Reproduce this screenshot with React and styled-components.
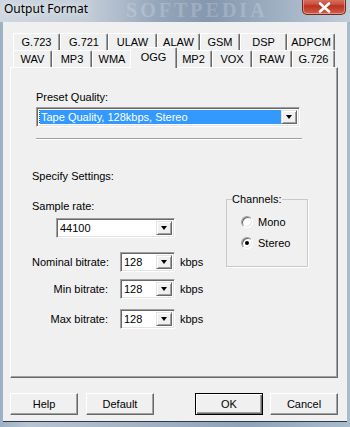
import React from "react";
import styled, { createGlobalStyle, css } from "styled-components";

const GlobalStyle = createGlobalStyle`
  html, body {
    margin: 0;
    padding: 0;
    background: #8c9fb4;
  }
  * {
    box-sizing: border-box;
  }
`;

const topRow = [
  { label: "G.723", w: 47 },
  { label: "G.721", w: 48 },
  { label: "ULAW", w: 49 },
  { label: "ALAW", w: 43 },
  { label: "GSM", w: 40 },
  { label: "DSP", w: 47 },
  { label: "ADPCM", w: 48 },
];

const bottomRow = [
  { label: "WAV", w: 39 },
  { label: "MP3", w: 40 },
  { label: "WMA", w: 40 },
  { label: "OGG", w: 43, active: true },
  { label: "MP2", w: 37 },
  { label: "VOX", w: 40 },
  { label: "RAW", w: 40 },
  { label: "G.726", w: 43 },
];

const bitrates = [
  { label: "Nominal bitrate:", top: 14 },
  { label: "Min bitrate:", top: 7 },
  { label: "Max bitrate:", top: 10 },
];

const App = () => {
  return (
    <>
      <GlobalStyle />
      <Window>
        <TitleBar>
          <Title>Output Format</Title>
          <Watermark>SOFTPEDIA</Watermark>
          <CloseButton>
            <svg width="13" height="11" viewBox="0 0 13 11">
              <path
                d="M2 1.5 L11 9.5 M11 1.5 L2 9.5"
                stroke="#ffffff"
                strokeWidth="2.6"
                strokeLinecap="round"
              />
            </svg>
          </CloseButton>
        </TitleBar>

        <Client>
          <TabStrip>
            <TabRow>
              {topRow.map((t) => (
                <Tab key={t.label} $w={t.w}>
                  {t.label}
                </Tab>
              ))}
            </TabRow>
            <TabRow>
              {bottomRow.map((t) => (
                <Tab key={t.label} $w={t.w} $active={t.active}>
                  {t.label}
                </Tab>
              ))}
            </TabRow>
          </TabStrip>

          <Panel>
            <PresetSection>
              <Label>Preset Quality:</Label>
              <Combo $w={264} $top={3}>
                <ComboField>
                  <Selected>Tape Quality, 128kbps, Stereo</Selected>
                </ComboField>
                <DropButton>
                  <Arrow />
                </DropButton>
              </Combo>
              <Separator />
            </PresetSection>

            <Label $top={30}>Specify Settings:</Label>

            <SettingsRow>
              <LeftColumn>
                <Label $top={4}>Sample rate:</Label>
                <Combo $w={119} $top={5} $left={24}>
                  <ComboField>44100</ComboField>
                  <DropButton>
                    <Arrow />
                  </DropButton>
                </Combo>

                {bitrates.map((b) => (
                  <BitrateRow key={b.label} $top={b.top}>
                    <RowLabel>{b.label}</RowLabel>
                    <Combo $w={55}>
                      <ComboField>128</ComboField>
                      <DropButton>
                        <Arrow />
                      </DropButton>
                    </Combo>
                    <Unit>kbps</Unit>
                  </BitrateRow>
                ))}
              </LeftColumn>

              <GroupBox>
                <Legend>Channels:</Legend>
                <RadioItem>
                  <Radio />
                  Mono
                </RadioItem>
                <RadioItem>
                  <Radio $checked />
                  Stereo
                </RadioItem>
              </GroupBox>
            </SettingsRow>
          </Panel>

          <ButtonBar>
            <ButtonGroup $gap={8}>
              <Button>Help</Button>
              <Button>Default</Button>
            </ButtonGroup>
            <ButtonGroup $gap={7}>
              <Button $default>OK</Button>
              <Button>Cancel</Button>
            </ButtonGroup>
          </ButtonBar>
        </Client>
      </Window>
    </>
  );
};

export default App;

const uiFont = css`
  font-family: "Liberation Sans", Arial, sans-serif;
  font-size: 11px;
  color: #000;
`;

const Window = styled.div`
  width: 350px;
  height: 427px;
  overflow: hidden;
  display: flex;
  flex-direction: column;
  background: linear-gradient(
    90deg,
    #9db0c4 0%,
    #b7c4d2 8%,
    #a3b3c4 40%,
    #8ea3b9 70%,
    #a9bccd 100%
  );
`;

const TitleBar = styled.div`
  height: 22px;
  display: flex;
  align-items: flex-start;
  padding-left: 4px;
  overflow: hidden;
  background: linear-gradient(
    90deg,
    #cfd7e0 0%,
    #c3cdd8 25%,
    #94a6bb 45%,
    #8497ae 60%,
    #9fb1c4 80%,
    #c2cdd9 100%
  );
`;

const Title = styled.span`
  font-family: "Noto Sans", "Open Sans", sans-serif;
  font-size: 12px;
  line-height: 18px;
  color: #000;
  text-shadow: 0 0 6px rgba(255, 255, 255, 0.9);
  white-space: nowrap;
`;

const Watermark = styled.span`
  font-family: "Liberation Serif", serif;
  font-weight: bold;
  font-size: 20px;
  line-height: 20px;
  letter-spacing: 3px;
  color: rgba(255, 255, 255, 0.2);
  margin-left: 38px;
  white-space: nowrap;
`;

const CloseButton = styled.div`
  margin-left: auto;
  margin-right: 4px;
  margin-top: -4px;
  width: 44px;
  height: 19px;
  padding-top: 4px;
  border: 1px solid #6b2a22;
  border-top: none;
  border-radius: 0 0 5px 5px;
  display: flex;
  justify-content: center;
  align-items: center;
  background: linear-gradient(180deg, #e08c7c 0%, #c9523f 45%, #b8321f 55%, #d2604a 100%);
  box-shadow: inset 0 0 0 1px rgba(255, 200, 190, 0.5);
`;

const Client = styled.div`
  flex: 0 0 400px;
  margin: 0 3px;
  background: #f0f0f0;
  padding: 11px 9px 0 7px;
  display: flex;
  flex-direction: column;
  border-bottom: 1px solid #2d3a46;
`;

const TabStrip = styled.div`
  margin: 0 2px 0 3px;
  display: flex;
  flex-direction: column;
`;

const TabRow = styled.div`
  display: flex;
  height: 17px;
`;

const Tab = styled.div`
  ${uiFont};
  flex: 0 0 ${(p) => p.$w}px;
  height: 17px;
  display: flex;
  align-items: center;
  justify-content: center;
  background: #f0f0f0;
  border-top: 1px solid #ffffff;
  border-left: 1px solid #ffffff;
  border-right: 1px solid #696969;
  border-radius: 2px 2px 0 0;
  box-shadow: inset -1px 0 0 #a0a0a0;
  ${(p) =>
    p.$active &&
    css`
      position: relative;
      z-index: 2;
      height: 21px;
      margin: -3px -2px -1px -2px;
      flex-basis: ${p.$w + 4}px;
      padding-bottom: 3px;
    `}
`;

const Panel = styled.div`
  height: 311px;
  background: #f0f0f0;
  border-top: 1px solid #ffffff;
  border-left: 1px solid #ffffff;
  border-right: 1px solid #696969;
  border-bottom: 1px solid #696969;
  box-shadow: inset -1px -1px 0 #a0a0a0;
  padding: 23px 0 0 21px;
  display: flex;
  flex-direction: column;
  align-items: flex-start;
`;

const PresetSection = styled.div`
  margin-left: 4px;
  width: 266px;
  display: flex;
  flex-direction: column;
`;

const Label = styled.div`
  ${uiFont};
  line-height: 13px;
  margin-top: ${(p) => p.$top || 0}px;
  white-space: nowrap;
`;

const Combo = styled.div`
  width: ${(p) => p.$w}px;
  height: 20px;
  margin-top: ${(p) => p.$top || 0}px;
  margin-left: ${(p) => p.$left || 0}px;
  display: flex;
  background: #ffffff;
  border: 1px solid;
  border-color: #a0a0a0 #ffffff #ffffff #a0a0a0;
  box-shadow: inset 1px 1px 0 #696969, inset -1px -1px 0 #e3e3e3;
  padding: 2px;
`;

const ComboField = styled.div`
  ${uiFont};
  flex: 1;
  display: flex;
  align-items: center;
  padding-left: 1px;
  overflow: hidden;
  white-space: nowrap;
`;

const Selected = styled.span`
  display: flex;
  align-items: center;
  width: 100%;
  height: 100%;
  padding-left: 1px;
  background: #3399ff;
  color: #ffffff;
  outline: 1px dotted #1d5a9a;
`;

const DropButton = styled.div`
  flex: 0 0 16px;
  display: flex;
  align-items: center;
  justify-content: center;
  background: #f0f0f0;
  border: 1px solid;
  border-color: #e3e3e3 #696969 #696969 #e3e3e3;
  box-shadow: inset 1px 1px 0 #ffffff, inset -1px -1px 0 #a0a0a0;
`;

const Arrow = styled.span`
  width: 0;
  height: 0;
  border-left: 3.5px solid transparent;
  border-right: 3.5px solid transparent;
  border-top: 4px solid #000;
`;

const Separator = styled.div`
  margin-top: 11px;
  height: 2px;
  border-top: 1px solid #a0a0a0;
  border-bottom: 1px solid #ffffff;
`;

const SettingsRow = styled.div`
  display: flex;
  margin-top: 13px;
`;

const LeftColumn = styled.div`
  width: 194px;
  display: flex;
  flex-direction: column;
  align-items: flex-start;
`;

const BitrateRow = styled.div`
  display: flex;
  align-items: center;
  margin-top: ${(p) => p.$top}px;
`;

const RowLabel = styled.span`
  ${uiFont};
  width: 76px;
  margin-right: 12px;
  text-align: right;
  white-space: nowrap;
`;

const Unit = styled.span`
  ${uiFont};
  margin-left: 5px;
`;

const GroupBox = styled.fieldset`
  width: 82px;
  height: 74px;
  margin: 0;
  margin-top: -3px;
  padding: 9px 0 0 14px;
  border: 1px solid #c9c9c9;
  box-shadow: 1px 1px 0 #ffffff;
  display: flex;
  flex-direction: column;
  gap: 8px;
`;

const Legend = styled.legend`
  ${uiFont};
  padding: 0;
  margin-left: -9px;
  line-height: 13px;
`;

const RadioItem = styled.label`
  ${uiFont};
  display: flex;
  align-items: center;
  gap: 5px;
  height: 13px;
`;

const Radio = styled.span`
  width: 12px;
  height: 12px;
  border-radius: 50%;
  background: #ffffff;
  border: 1px solid;
  border-color: #a0a0a0 #ffffff #ffffff #a0a0a0;
  box-shadow: inset 1px 1px 0 #696969, inset -1px -1px 0 #e3e3e3;
  display: flex;
  align-items: center;
  justify-content: center;

  &::after {
    content: "";
    width: 4px;
    height: 4px;
    border-radius: 50%;
    background: ${(p) => (p.$checked ? "#000" : "transparent")};
  }
`;

const ButtonBar = styled.div`
  margin-top: 15px;
  display: flex;
  justify-content: space-between;
`;

const ButtonGroup = styled.div`
  display: flex;
  gap: ${(p) => p.$gap}px;
`;

const Button = styled.div`
  ${uiFont};
  width: 68px;
  height: 22px;
  display: flex;
  align-items: center;
  justify-content: center;
  background: #f0f0f0;
  border: 1px solid;
  border-color: #ffffff #696969 #696969 #ffffff;
  box-shadow: inset -1px -1px 0 #a0a0a0;
  ${(p) =>
    p.$default &&
    css`
      border: 1px solid #000;
      box-shadow: inset 1px 1px 0 #ffffff, inset -1px -1px 0 #696969,
        inset -2px -2px 0 #a0a0a0;
    `}
`;
